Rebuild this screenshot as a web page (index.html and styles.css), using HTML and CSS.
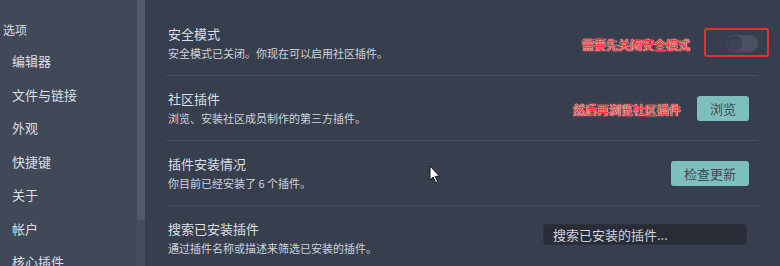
FILE: index.html
```html
<!DOCTYPE html>
<html lang="zh-CN">
<head>
<meta charset="utf-8">
<link rel="stylesheet" href="styles.css">
</head>
<body>
<div class="app">
  <aside class="sidebar">
    <div class="nav">
      <div class="nav-header">选项</div>
      <div class="nav-item">编辑器</div>
      <div class="nav-item">文件与链接</div>
      <div class="nav-item">外观</div>
      <div class="nav-item">快捷键</div>
      <div class="nav-item">关于</div>
      <div class="nav-item">帐户</div>
      <div class="nav-item">核心插件</div>
    </div>
    <div class="scrollbar"><div class="thumb"></div></div>
  </aside>
  <main class="content">
    <section class="row">
      <div class="info">
        <div class="title">安全模式</div>
        <div class="desc">安全模式已关闭。你现在可以启用社区插件。</div>
      </div>
      <div class="toggle"><span class="knob"></span></div>
    </section>
    <section class="row">
      <div class="info">
        <div class="title">社区插件</div>
        <div class="desc">浏览、安装社区成员制作的第三方插件。</div>
      </div>
      <button class="btn">浏览</button>
    </section>
    <section class="row">
      <div class="info">
        <div class="title">插件安装情况</div>
        <div class="desc">你目前已经安装了 6 个插件。</div>
      </div>
      <button class="btn">检查更新</button>
    </section>
    <section class="row last">
      <div class="info">
        <div class="title">搜索已安装插件</div>
        <div class="desc">通过插件名称或描述来筛选已安装的插件。</div>
      </div>
      <div class="search">搜索已安装的插件...</div>
    </section>
  </main>
  <div class="note note-1">需要先关闭安全模式</div>
  <div class="note note-2">然后再浏览社区插件</div>
  <div class="redbox"></div>
  <svg class="cursor" width="13" height="20" viewBox="0 0 13 20">
    <path d="M1 1 L1 15 L4.2 12 L6.6 17.6 L8.6 16.7 L6.3 11.3 L10.6 11.3 Z" fill="#ffffff" stroke="#111" stroke-width="1" stroke-linejoin="round"/>
  </svg>
</div>
</body>
</html>
```

FILE: styles.css
```css
* { box-sizing: border-box; }
html, body { margin: 0; padding: 0; }
body {
  width: 780px;
  height: 266px;
  overflow: hidden;
  background: #373f4f;
  font-family: "Noto Sans CJK SC", "Noto Sans", sans-serif;
}
.app {
  position: relative;
  display: flex;
  width: 780px;
  height: 266px;
  overflow: hidden;
}
.sidebar {
  display: flex;
  width: 145px;
  flex: none;
  background: #414959;
}
.nav {
  width: 137px;
  padding-top: 21px;
}
.nav-header {
  padding-left: 3px;
  font-size: 12px;
  line-height: 18px;
  color: #d6dae0;
  margin-bottom: 5px;
}
.nav-item {
  padding-left: 12px;
  font-size: 13px;
  line-height: 33.5px;
  height: 33.5px;
  color: #dcdfe4;
  white-space: nowrap;
}
.scrollbar {
  width: 8px;
  background: #454d5d;
}
.thumb {
  height: 220px;
  background: #535b6b;
  border-radius: 0 0 3px 3px;
}
.content {
  flex: 1;
  padding: 11px 22px 0 21px;
}
.row {
  display: flex;
  align-items: center;
  justify-content: space-between;
  height: 65px;
  padding: 0 9px 0 2px;
  border-bottom: 1px solid #464e5e;
}
.row.last { border-bottom: none; height: 64px; }
.info { display: flex; flex-direction: column; }
.title {
  font-size: 13px;
  line-height: 18px;
  color: #dcdfe4;
}
.desc {
  font-size: 11px;
  line-height: 18px;
  margin-top: 1px;
  color: #cfd3d9;
}
.toggle {
  width: 32px;
  height: 17px;
  margin-right: -9px;
  margin-top: 1px;
  border-radius: 9px;
  background: #4a5262;
  padding: 1px;
}
.knob {
  display: block;
  width: 15px;
  height: 15px;
  border-radius: 50%;
  background: #3c4353;
  box-shadow: inset 1px 1px 2px rgba(0,0,0,0.25);
}
.btn {
  height: 25px;
  padding: 0 13px;
  border: none;
  border-radius: 3px;
  background: #7dbfbe;
  color: #3e4a57;
  font-family: inherit;
  font-size: 13px;
  line-height: 25px;
}
.search {
  width: 204px;
  height: 21px;
  margin-right: 2px;
  margin-bottom: 8px;
  padding-left: 9px;
  border-radius: 3px;
  background: #272c37;
  border: 1px solid #2d323d;
  color: #d0d3d8;
  font-size: 13px;
  line-height: 19px;
  white-space: nowrap;
}
.note {
  position: absolute;
  font-size: 12px;
  font-weight: 500;
  line-height: 16px;
  color: #ff3535;
  white-space: nowrap;
  text-shadow: 0 0 1px #ffffff, 0 0 1px #ffffff, 0 0 3px rgba(255,60,60,0.8);
}
.note-1 { left: 582px; top: 37px; }
.note-2 { left: 573px; top: 102px; }
.redbox {
  position: absolute;
  left: 704px;
  top: 28px;
  width: 65px;
  height: 29px;
  border: 2px solid #e8312f;
  border-radius: 3px;
}
.cursor {
  position: absolute;
  left: 429px;
  top: 165px;
}
```
